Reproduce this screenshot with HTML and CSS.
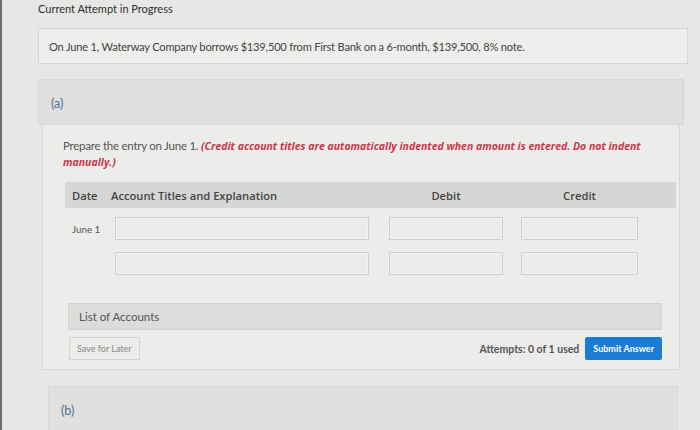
FILE: index.html
```html
<!DOCTYPE html>
<html>
<head>
<meta charset="utf-8">
<link rel="stylesheet" href="styles.css">
</head>
<body>
<div class="page">
  <div class="title">Current Attempt in Progress</div>
  <div class="problem">On June 1, Waterway Company borrows $139,500 from First Bank on a 6-month, $139,500, 8% note.</div>
  <div class="part-head">(a)</div>
  <div class="part-body">
    <p class="instr"><span>Prepare the entry on June 1.</span> <span class="red">(Credit account titles are automatically indented when amount is entered. Do not indent</span> <span class="red">manually.)</span></p>
    <div class="table">
      <div class="thead">
        <div class="c-date">Date</div>
        <div class="c-acct">Account Titles and Explanation</div>
        <div class="c-deb">Debit</div>
        <div class="c-cred">Credit</div>
      </div>
      <div class="row">
        <div class="c-date date">June 1</div>
        <div class="c-acct"><div class="inp"></div></div>
        <div class="c-deb"><div class="inp"></div></div>
        <div class="c-cred"><div class="inp"></div></div>
      </div>
      <div class="row">
        <div class="c-date date"></div>
        <div class="c-acct"><div class="inp"></div></div>
        <div class="c-deb"><div class="inp"></div></div>
        <div class="c-cred"><div class="inp"></div></div>
      </div>
    </div>
    <div class="list">List of Accounts</div>
    <div class="actions">
      <div class="save">Save for Later</div>
      <div class="right">
        <span class="attempts">Attempts: 0 of 1 used</span>
        <span class="submit">Submit Answer</span>
      </div>
    </div>
  </div>
  <div class="part-head part-b">(b)</div>
</div>
</body>
</html>
```

FILE: styles.css
```css
html, body {
  margin: 0;
  padding: 0;
}
body {
  width: 700px;
  height: 430px;
  overflow: hidden;
  background: #e7e7e5;
  font-family: Lato, "Noto Sans", sans-serif;
  color: #3a3a3a;
}
.page {
  box-sizing: border-box;
  height: 430px;
  border-left: 2px solid #6f6f6f;
  padding: 2px 12px 0 36px;
}
.title {
  font-size: 11px;
  color: #2f2f2f;
  line-height: 14px;
}
.problem {
  margin-top: 12px;
  background: #eeeeec;
  border: 1px solid #d6d6d4;
  height: 36px;
  box-sizing: border-box;
  padding: 0 10px;
  display: flex;
  align-items: center;
  font-size: 11.1px;
  color: #444;
  letter-spacing: -0.2px;
}
.part-head {
  margin-top: 15px;
  height: 46px;
  box-sizing: border-box;
  background: #e0e0de;
  border: 1px solid #d8d8d6;
  padding: 16px 0 0 12px;
  font-size: 12.5px;
  color: #4d6e98;
  margin-right: 4px;
}
.part-body {
  margin: 0 8px 0 4px;
  height: 245px;
  box-sizing: border-box;
  background: #ececea;
  border: 1px solid #d6d6d4;
  border-top: none;
  padding: 13px 17px 0 20px;
}
.instr {
  margin: 0;
  font-size: 11.5px;
  line-height: 15px;
  color: #555;
  letter-spacing: -0.25px;
}
.red {
  font-family: "Open Sans", sans-serif;
  color: #c8394b;
  font-weight: bold;
  font-style: italic;
  font-size: 10.5px;
  line-height: 15px;
  letter-spacing: 0;
}
.table {
  margin-top: 12px;
  margin-left: 2px;
  width: 611px;
}
.thead {
  display: flex;
  align-items: center;
  height: 26px;
  background: #d6d6d4;
  font-family: "Open Sans", sans-serif;
  font-size: 11.2px;
  font-weight: 600;
  color: #444;
}
.row {
  display: flex;
  align-items: center;
  margin-top: 9px;
  height: 23px;
}
.row + .row {
  margin-top: 12px;
}
.c-date {
  width: 46px;
  padding-left: 7px;
  box-sizing: border-box;
}
.c-acct {
  width: 268px;
  box-sizing: border-box;
}
.row .c-acct {
  padding: 0 10px 0 4px;
}
.c-deb {
  width: 134px;
  box-sizing: border-box;
  text-align: center;
  padding: 0 10px;
}
.c-cred {
  width: 163px;
  box-sizing: border-box;
  text-align: center;
  padding: 0 38px 0 8px;
}
.date {
  font-size: 9.8px;
  color: #555;
}
.inp {
  height: 23px;
  box-sizing: border-box;
  border: 1px solid #cfcfcd;
  background: #ebebe9;
  box-shadow: inset 0 0 0 1px #f2f2f0;
}
.list {
  margin-top: 28px;
  margin-left: 5px;
  height: 27px;
  box-sizing: border-box;
  background: #dcdcda;
  border: 1px solid #d2d2d0;
  padding-left: 10px;
  display: flex;
  align-items: center;
  font-size: 11.5px;
  color: #555;
}
.actions {
  margin-top: 7px;
  margin-left: 6px;
  display: flex;
  justify-content: space-between;
  align-items: center;
}
.save {
  height: 23px;
  box-sizing: border-box;
  border: 1px solid #d4d4d2;
  padding: 0 7px;
  display: flex;
  align-items: center;
  font-size: 9px;
  color: #888;
}
.right {
  display: flex;
  align-items: center;
}
.attempts {
  font-size: 10.5px;
  font-weight: bold;
  color: #555;
  margin-right: 6px;
}
.submit {
  height: 23px;
  box-sizing: border-box;
  padding: 0 8px;
  display: flex;
  align-items: center;
  background: #1a7dd3;
  color: #fff;
  font-size: 9px;
  font-weight: bold;
  border-radius: 2px;
}
.part-b {
  margin-top: 16px;
  margin-left: 10px;
  margin-right: 10px;
  height: 50px;
  padding-top: 16px;
}
```
